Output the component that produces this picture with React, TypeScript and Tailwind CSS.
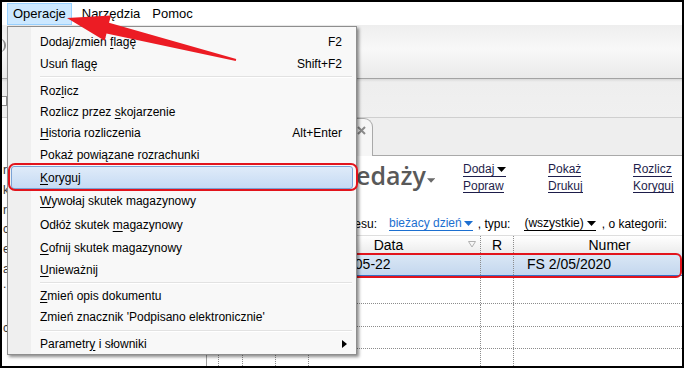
import React from "react";

type Entry =
  | {
      kind: "item";
      label: React.ReactNode;
      shortcut?: string;
      h: string;
      active?: boolean;
      sub?: boolean;
    }
  | { kind: "sep"; h: string };

const U = ({ children }: { children: React.ReactNode }) => (
  <span className="underline decoration-1 underline-offset-[2px]">{children}</span>
);

const entries: Entry[] = [
  { kind: "item", label: <>Dodaj/zmień <U>f</U>lagę</>, shortcut: "F2", h: "h-[23px]" },
  { kind: "item", label: <>Usuń fla<U>g</U>ę</>, shortcut: "Shift+F2", h: "h-[21px]" },
  { kind: "sep", h: "h-[6px]" },
  { kind: "item", label: <>Roz<U>l</U>icz</>, h: "h-[21px]" },
  { kind: "item", label: <>Rozlicz przez <U>s</U>kojarzenie</>, h: "h-[21px]" },
  { kind: "item", label: <><U>H</U>istoria rozliczenia</>, shortcut: "Alt+Enter", h: "h-[22px]" },
  { kind: "item", label: <>Pokaż powiązane rozrachunki</>, h: "h-[22px]" },
  { kind: "item", label: <><U>K</U>oryguj</>, h: "h-[23px]", active: true },
  { kind: "item", label: <><U>W</U>ywołaj skutek magazynowy</>, h: "h-[24px]" },
  { kind: "item", label: <>Odłóż skutek <U>m</U>agazynowy</>, h: "h-[23px]" },
  { kind: "item", label: <><U>C</U>ofnij skutek magazynowy</>, h: "h-[23px]" },
  { kind: "item", label: <><U>U</U>nieważnij</>, h: "h-[22px]" },
  { kind: "sep", h: "h-[4px]" },
  { kind: "item", label: <><U>Z</U>mień opis dokumentu</>, h: "h-[21px]" },
  { kind: "item", label: <>Zmień znacznik 'Podpisano elektronicznie'</>, h: "h-[22px]" },
  { kind: "sep", h: "h-[5px]" },
  { kind: "item", label: <>Parametr<U>y</U> i słowniki</>, h: "h-[21px]", sub: true },
];

const Tri = ({ className }: { className?: string }) => (
  <svg width="9" height="5" viewBox="0 0 9 5" className={className}>
    <path d="M0 0H9L4.5 5Z" fill="currentColor" />
  </svg>
);

const leftFragments = [
  { t: "r.", h: "h-[20px]" },
  { t: "k", h: "h-[20px]" },
  { t: "r.", h: "h-[19px]" },
  { t: "c", h: "h-[20px]" },
  { t: "e", h: "h-[20px]" },
  { t: "a", h: "h-[15px]" },
  { t: ".", h: "h-[44px]" },
  { t: "c", h: "h-[20px]" },
];

// widths of the grid columns (incl. the dotted right border)
const colW = ["w-[12px]", "w-[24px]", "w-[33px]", "w-[33px]", "w-[172px]", "w-[33px]", "w-[192px]"];

function EmptyRow({ h }: { h: string }) {
  return (
    <div className={`flex shrink-0 ${h} border-b border-dotted border-[#8c8c8c]`}>
      {colW.map((w, i) => (
        <div key={i} className={`${w} shrink-0 h-full border-r border-dotted border-[#8c8c8c]`} />
      ))}
    </div>
  );
}

export default function App() {
  return (
    <div className="relative w-[684px] h-[368px] bg-black p-[2px] font-['Liberation_Sans',Arial,sans-serif] text-black">
      <div className="w-full h-full bg-white overflow-hidden flex flex-col">
        {/* menu bar */}
        <div className="h-[23px] shrink-0 flex items-center text-[13px] bg-white">
          <div className="ml-[5px] h-[22px] flex items-center px-[5px] border border-[#99d1ff] bg-[#cce8ff]">
            Operacje
          </div>
          <div className="ml-[4px] h-[22px] flex items-center px-[5px] border border-transparent">
            Narzędzia
          </div>
          <div className="h-[22px] flex items-center px-[5px] border border-transparent">Pomoc</div>
        </div>

        {/* toolbar */}
        <div className="h-[54px] shrink-0 flex items-start border-b border-[#a3a3a3] bg-[linear-gradient(to_bottom,#eeeeee,#f8f8f8_45%,#eaeaea)]">
          <div className="mt-[14px] ml-[-2px] w-[6px] h-[13px] border-r-2 border-[#8f8f8f] rounded-r-full" />
        </div>

        {/* second band */}
        <div className="h-[39px] shrink-0 flex items-start border-b border-[#cfcfcf] bg-[linear-gradient(to_bottom,#d9d9d9,#eeeeee_3px,#f0f0f0)]">
          <div className="mt-[17px] ml-[-1px] w-[6px] h-[10px] border border-[#8f8f8f] bg-white" />
        </div>

        {/* main area */}
        <div className="flex-1 flex min-h-0">
          {/* left pane */}
          <div className="w-[205px] shrink-0 border-r border-[#a0a0a0] bg-white flex flex-col pt-[42px] pl-[1px] text-[12px] text-[#333]">
            {leftFragments.map((f, i) => (
              <div key={i} className={`${f.h} shrink-0 leading-[20px]`}>
                {f.t}
              </div>
            ))}
          </div>

          {/* right pane */}
          <div className="flex-1 min-w-0 flex flex-col overflow-hidden">
            {/* tab strip */}
            <div className="h-[38px] shrink-0 flex bg-[#eeeeee]">
              <div className="ml-[8px] w-[158px] shrink-0 h-full bg-[#f6f6f6] border-t border-r border-[#a9a9a9] rounded-tr-[9px] flex items-start justify-end pt-[7px] pr-[6px]">
                <svg width="9" height="9" viewBox="0 0 9 9">
                  <path d="M1 1L8 8M8 1L1 8" stroke="#8a8a8a" strokeWidth="2" />
                </svg>
              </div>
              <div className="flex-1 border-b border-[#a9a9a9]" />
            </div>

            {/* content */}
            <div className="flex-1 flex flex-col bg-white min-h-0">
              {/* title + actions */}
              <div className="h-[56px] shrink-0 flex">
                <div className="w-[256px] shrink-0 flex justify-end items-start pt-[4px] pr-[28px] text-[#595959]">
                  <span className="font-['Open_Sans',sans-serif] font-semibold text-[25px] leading-[30px] whitespace-nowrap">
                    Faktury sprzedaży
                  </span>
                  <Tri className="mt-[18px] ml-[1px] text-[#6a6a6a]" />
                </div>
                {[
                  ["Dodaj", "Popraw"],
                  ["Pokaż", "Drukuj"],
                  ["Rozlicz", "Koryguj"],
                ].map(([a, b], i) => (
                  <div
                    key={i}
                    className="w-[85px] shrink-0 pt-[6px] flex flex-col items-start text-[12px] leading-[16px] text-[#1d1d4a]"
                  >
                    <span className="flex items-center border-b border-[#1d1d4a] h-[15px]">
                      {a}
                      {i === 0 && <Tri className="ml-[3px] text-black" />}
                    </span>
                    <span className="mt-[1px] border-b border-[#1d1d4a] h-[15px]">{b}</span>
                  </div>
                ))}
              </div>

              {/* filter row */}
              <div className="h-[23px] shrink-0 flex items-center text-[12px] whitespace-nowrap">
                <span className="w-[170px] shrink-0 text-right">Pokaż dokumenty z okresu:</span>
                <span className="ml-[12px] flex items-center border-b border-[#1c6fd0] text-[#1c6fd0] h-[15px]">
                  bieżacy dzień
                  <Tri className="ml-[2px]" />
                </span>
                <span className="ml-[5px]">, typu:</span>
                <span className="ml-[14px] flex items-center border-b border-black h-[15px]">
                  (wszystkie)
                  <Tri className="ml-[3px]" />
                </span>
                <span className="ml-[6px]">, o kategorii:</span>
              </div>

              {/* grid header */}
              <div className="h-[18px] shrink-0 flex border-t border-[#dedede] bg-[linear-gradient(to_bottom,#ffffff,#ececec)] text-[14px] leading-[16px]">
                {colW.map((w, i) => (
                  <div
                    key={i}
                    className={`${w} shrink-0 h-full border-r border-dotted border-[#8c8c8c] flex items-center`}
                  >
                    {i === 4 && (
                      <>
                        <span className="flex-1 text-center">Data</span>
                        <svg width="8" height="7" viewBox="0 0 8 7" className="mr-[4px]">
                          <path d="M0.5 0.5H7.5L4 6Z" fill="none" stroke="#b0b0b0" />
                        </svg>
                      </>
                    )}
                    {i === 5 && <span className="flex-1 text-center">R</span>}
                    {i === 6 && <span className="flex-1 text-center">Numer</span>}
                  </div>
                ))}
              </div>

              {/* selected row */}
              <div className="h-[23px] shrink-0 flex border-b border-[#3a6fc4] bg-[linear-gradient(to_bottom,#dbe8f6,#c4d7ee)] text-[14px]">
                {colW.map((w, i) => (
                  <div
                    key={i}
                    className={`${w} shrink-0 h-full border-r border-dotted border-[#8c8c8c] flex items-center`}
                  >
                    {i === 4 && <span className="pl-[10px]">2020-05-22</span>}
                    {i === 6 && <span className="pl-[13px]">FS 2/05/2020</span>}
                  </div>
                ))}
              </div>

              <EmptyRow h="h-[28px]" />
              <EmptyRow h="h-[23px]" />
              <EmptyRow h="h-[22px]" />
              <EmptyRow h="h-[22px]" />
            </div>
          </div>
        </div>
      </div>

      {/* red outline around the grid row */}
      <div className="absolute left-[300px] top-[253px] w-[382px] h-[25px] border-2 border-[#e2141c] rounded-[6px] pointer-events-none" />

      {/* dropdown menu */}
      <div className="absolute left-[7px] top-[26px] w-[350px] border border-[#8e8e8e] bg-[linear-gradient(to_right,#efefef_0,#efefef_23px,#f8f8f8_23px)] pt-[3px] text-[12px] shadow-[2px_2px_3px_rgba(0,0,0,0.45)]">
        {entries.map((e, i) =>
          e.kind === "sep" ? (
            <div key={i} className={`${e.h} flex items-center ml-[32px] mr-[4px]`}>
              <div className="w-full h-[2px] border-t border-[#e2e2e2] border-b border-b-white" />
            </div>
          ) : (
            <div
              key={i}
              className={`${e.h} mx-[3px] flex items-center justify-between pl-[28px] pr-[10px] border rounded-[3px] ${
                e.active
                  ? "border-[#7aa3d6] bg-[linear-gradient(to_bottom,#dfebf9,#c6dbf4)]"
                  : "border-transparent"
              }`}
            >
              <span className="whitespace-nowrap">{e.label}</span>
              {e.shortcut && <span>{e.shortcut}</span>}
              {e.sub && (
                <svg width="5" height="8" viewBox="0 0 5 8" className="-mr-[5px]">
                  <path d="M0 0L5 4L0 8Z" fill="#000" />
                </svg>
              )}
            </div>
          )
        )}
      </div>

      {/* red outline around "Koryguj" */}
      <div className="absolute left-[8px] top-[163px] w-[350px] h-[28px] border-2 border-[#e2141c] rounded-[7px] pointer-events-none" />

      {/* red arrow */}
      <svg
        className="absolute left-0 top-0 pointer-events-none"
        width="684"
        height="368"
        viewBox="0 0 684 368"
      >
        <polygon
          points="67,18 111,15.5 109,22.8 236.2,59 235.8,61 106.5,33.4 104.7,40.7"
          fill="#ec1c24"
        />
      </svg>
    </div>
  );
}
